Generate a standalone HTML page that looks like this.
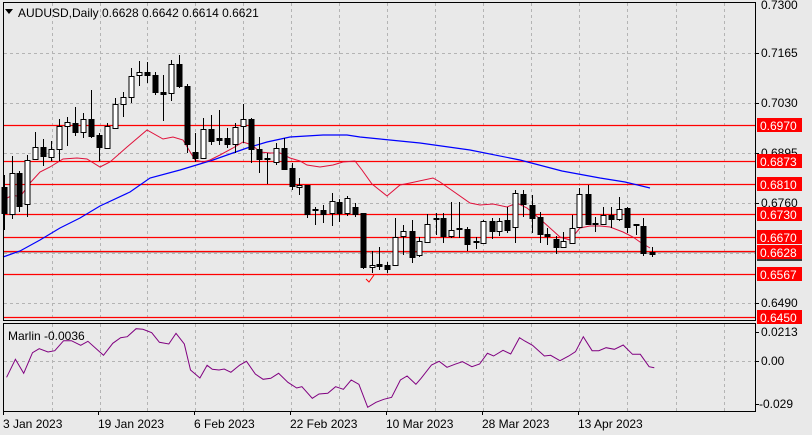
<!DOCTYPE html>
<html><head><meta charset="utf-8"><style>
html,body{margin:0;padding:0;background:#e9e9e9;}
body{width:812px;height:435px;overflow:hidden;position:relative;font-family:"Liberation Sans",Tahoma,sans-serif;}
svg{position:absolute;left:0;top:0;}
text{font-family:"Liberation Sans",sans-serif;font-size:12px;}
</style></head><body>
<svg id="s" width="812" height="435" xmlns="http://www.w3.org/2000/svg">
<rect x="0" y="0" width="812" height="435" fill="#e9e9e9"/>
<g id="grid" stroke="#b4b4b4" stroke-dasharray="3,3" stroke-width="1"></g>
<g id="hl"></g>
<polyline id="blue" fill="none" stroke="#0000ff" stroke-width="1.2"/>
<polyline id="red" fill="none" stroke="#e0103a" stroke-width="1"/>
<g id="candles"></g>
<polyline id="marlin" fill="none" stroke="#800080" stroke-width="1"/>
<path d="M366,279 L369,282 L374,275" fill="none" stroke="#ff0000" stroke-width="1"/>
<rect x="3.5" y="2.5" width="752" height="318" fill="none" stroke="#000"/>
<rect x="3.5" y="323.5" width="752" height="88" fill="none" stroke="#000"/>
<g id="labels"></g>
<path d="M5,9 L13,9 L9,14 Z" fill="#000"/>
<text x="18" y="17">AUDUSD,Daily  0.6628 0.6642 0.6614 0.6621</text>
<text x="8" y="340">Marlin -0.0036</text>
</svg>
<script>
var NS="http://www.w3.org/2000/svg";
function el(p,n,a,t){var e=document.createElementNS(NS,n);for(var k in a)e.setAttribute(k,a[k]);if(t!==undefined)e.textContent=t;document.getElementById(p).appendChild(e);return e;}
// grid
var gx=[52,100,147,195,243,291,339,387,435,483,531,579,627,676,724];
gx.forEach(function(x){el("grid","line",{x1:x+.5,y1:3,x2:x+.5,y2:320});el("grid","line",{x1:x+.5,y1:324,x2:x+.5,y2:411});});
[53,103,153,203,253,303].forEach(function(y){el("grid","line",{x1:4,y1:y+.5,x2:755,y2:y+.5});});
el("grid","line",{x1:4,y1:361.5,x2:755,y2:361.5});
// horizontal levels
el("hl","line",{x1:4,y1:252.5,x2:755,y2:252.5,stroke:"#b0b0b0"});
[125,161,184,214,237,251,274,317].forEach(function(y){el("hl","line",{x1:4,y1:y+.5,x2:755,y2:y+.5,stroke:"#ff0000","stroke-width":1.3});});
// candles: x, high, open, close, low (pixel y)
var C=[
[4,175,187,213,230],[12,156,214,173,219],[19,171,173,206,212],[27,155,204,160,217],[35,132,159,147,160],[43,139,147,156,166],[51,141,157,149,161],[59,119,149,126,161],[67,117,126,122,146],[75,107,123,132,136],[83,113,132,119,138],[91,90,119,136,138],[99,133,135,147,161],[107,123,148,126,149],[115,98,128,104,129],[123,92,104,97,117],[131,68,97,76,103],[139,61,75,72,86],[147,62,72,75,83],[155,72,75,92,95],[163,75,92,94,121],[171,60,93,64,101],[179,55,64,86,88],[187,84,86,144,153],[195,133,152,158,162],[203,118,158,129,158],[211,115,129,141,145],[219,110,138,140,145],[227,128,138,144,148],[235,123,144,127,153],[243,104,126,119,143],[251,118,119,149,163],[259,137,149,159,173],[267,153,158,159,184],[276,143,162,148,165],[284,138,148,169,170],[292,163,168,186,190],[299,178,187,185,195],[307,185,185,214,218],[315,207,209,210,225],[323,205,210,214,223],[332,193,213,201,226],[339,199,202,213,222],[347,196,213,198,216],[355,203,207,214,217],[363,213,213,267,269],[372,251,267,265,273],[379,247,264,266,270],[387,262,265,269,273],[395,218,265,237,266],[403,225,236,231,255],[412,220,231,257,263],[419,237,255,241,257],[427,214,242,224,243],[436,213,218,219,235],[443,213,218,236,243],[451,202,236,230,238],[459,202,228,229,238],[467,227,229,244,251],[476,237,241,242,249],[483,220,243,221,244],[492,218,221,231,239],[499,218,231,221,236],[507,207,220,230,233],[515,190,227,193,243],[523,190,194,204,217],[532,195,205,218,233],[540,212,217,234,243],[547,228,234,236,245],[556,236,239,247,254],[563,232,247,241,247],[572,215,243,228,243],[579,188,227,194,228],[588,185,194,224,225],[595,217,223,224,232],[603,207,224,215,225],[611,207,215,219,228],[619,197,219,209,221],[627,207,208,227,233],[636,224,224,225,235],[643,218,226,253,256],[652,247,252,254,257]];
C.forEach(function(c){var x=c[0],h=c[1],o=c[2],cl=c[3],l=c[4];
el("candles","line",{x1:x+.5,y1:h,x2:x+.5,y2:l,stroke:"#000"});
var t=Math.min(o,cl),b=Math.max(o,cl);if(b-t<1)b=t+1;
el("candles","rect",{x:x-2,y:t+.5,width:5,height:b-t,fill:o>cl?"#fff":"#000",stroke:"#000"});});
// MAs
document.getElementById("red").setAttribute("points","3,200 13,195 20,197 30,183 40,172 50,167 63,159 77,158 87,159 100,167 110,162 127,147 147,130 163,139 173,137 183,140 195,160 203,162 210,160 220,155 233,148 243,142 252,145 260,152 270,153 280,153 290,158 300,161 307,165 320,167 333,165 343,162 355,161 362,170 372,184 387,196 400,185 410,183 433,178 440,182 470,203 480,205 493,204 507,207 517,203 527,208 540,219 550,228 560,237 570,240 580,228 590,226 600,226 610,227 623,232 633,237 640,242 650,248");
document.getElementById("blue").setAttribute("points","3,257 20,251 40,240 60,228 80,218 100,206 130,192 150,178 180,170 213,160 247,148 267,142 290,137 323,135 347,135 360,137 380,139 420,143 470,150 520,160 562,171 600,178 625,182 650,188");
// Marlin
var M=[5,262,22,208,38,250,55,188,68,176,85,186,98,182,115,152,130,152,148,166,162,154,192,196,210,160,225,143,238,140,255,116,268,118,285,128,300,157,318,162,332,130,348,162,360,240,378,264,392,226,402,238,415,240,425,237,438,247,455,225,468,214,485,252,500,268,515,265,530,250,548,277,565,294,575,290,595,325,608,312,625,310,640,290,655,298,670,270,685,283,702,352,718,337,733,328,748,322,765,270,778,258,795,283,805,265,825,225,840,214,855,232,870,223,885,215,903,230,918,222,933,190,945,198,963,181,978,192,995,143,1005,153,1020,166,1043,198,1055,196,1073,212,1090,198,1103,185,1118,140,1135,182,1148,182,1162,173,1178,178,1195,165,1213,193,1228,193,1245,230,1255,233];
var pts=[];for(var i=0;i<M.length;i+=2){pts.push((4+M[i]/1.93).toFixed(1)+","+(290+M[i+1]/3).toFixed(1));}
document.getElementById("marlin").setAttribute("points",pts.join(" "));
// axis labels
[["0.7300",9],["0.7165",57],["0.7030",107],["0.6895",157],["0.6760",207],["0.6490",307],["0.0213",336],["0.00",365]].forEach(function(a){el("labels","text",{x:761,y:a[1]},a[0]);});
el("labels","text",{x:759,y:408},"-0.029");
[["0.6970",125],["0.6873",161],["0.6810",184],["0.6730",214],["0.6670",237],["0.6628",252],["0.6567",274],["0.6450",317]].forEach(function(a){var y=a[1];
el("labels","rect",{x:757,y:y-7,width:45,height:14,fill:"#ff0000"});
el("labels","text",{x:760,y:y+5,fill:"#fff"},a[0]);});
el("labels","line",{x1:757,y1:260,x2:802,y2:260,stroke:"#000","stroke-width":1.5});
[755,4].forEach(function(){});
for(var k=0;k<gx.length;k++){el("labels","line",{x1:756,y1:0,x2:759,y2:0});}
[["3 Jan 2023",3],["19 Jan 2023",98],["6 Feb 2023",194],["22 Feb 2023",290],["10 Mar 2023",386],["28 Mar 2023",482],["13 Apr 2023",578]].forEach(function(a){
el("labels","line",{x1:a[1]+.5,y1:411,x2:a[1]+.5,y2:415,stroke:"#000"});
el("labels","text",{x:a[1],y:428},a[0]);});
[53,103,153,203,303,332,361,404].forEach(function(y){el("labels","line",{x1:755,y1:y+.5,x2:759,y2:y+.5,stroke:"#000"});});
</script>
</body></html>
